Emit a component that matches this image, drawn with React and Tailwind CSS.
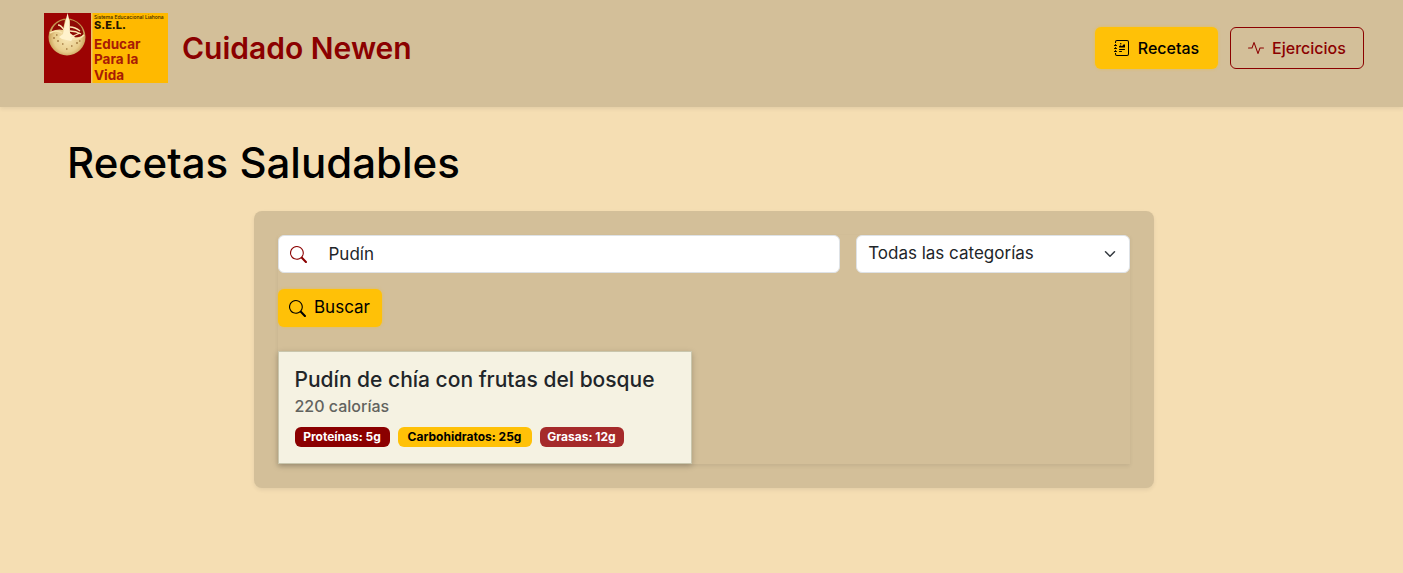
import { useState } from "react";
import { BsActivity, BsJournalRichtext, BsSearch } from "react-icons/bs";

const recipes = [
  {
    name: "Pudín de chía con frutas del bosque",
    calories: 220,
    nutrients: [
      { label: "Proteínas: 5g", tone: "min-w-[95px] bg-[#8b0000] text-white" },
      { label: "Carbohidratos: 25g", tone: "min-w-[134px] bg-[#ffc107] text-black" },
      { label: "Grasas: 12g", tone: "min-w-[84px] bg-[#a52a2a] text-white" },
    ],
  },
];

function Logo() {
  return (
    <svg viewBox="0 0 124 70" className="h-[70px] w-[124px] shrink-0" role="img" aria-label="Sistema Educacional Liahona">
      <defs>
        <radialGradient id="sphere" cx="0.5" cy="0.55" r="0.55">
          <stop offset="0" stopColor="#f7e6b4" />
          <stop offset="0.65" stopColor="#e8cd8c" />
          <stop offset="1" stopColor="#bd8d45" />
        </radialGradient>
      </defs>
      <rect width="124" height="70" fill="#ffb900" />
      <rect width="47" height="70" fill="#9c0303" />
      <rect x="47" width="1.5" height="70" fill="#e8c46c" />
      <circle cx="23" cy="24" r="18.5" fill="url(#sphere)" />
      <path d="M7.500 19C9 12 15 7.500 21 7L19 17Q13 15.500 7.500 19Z" fill="#8f0a05" />
      <path d="M26 7C33 8 38.500 13 39.500 21Q37 25 30 24L25 22Z" fill="#8f0a05" />
      <path d="M23.600 0L25.500 8L26 20L31 24L27 28L18 26L15 24L19 21L21.500 8Z" fill="#fff2cc" />
      <path d="M14 12Q17 12 20 17M26 14Q31 14 36 18M26 18Q32 18 37 21M27 24L36 20" stroke="#fbe6b2" strokeWidth="1.300" fill="none" />
      <path d="M6 20Q12 16 18 20M28 26Q35 27 40 22" stroke="#f9e4ae" strokeWidth="1.600" fill="none" />
      <path d="M9 25h2M13 28h2M12 22h1.500M32 30h2M35 28h1.500M22 36h1.500M18 31h1.500M27 33h1.500" stroke="#84541c" strokeWidth="1.200" />
      <g fontFamily="Inter, 'Liberation Sans', sans-serif">
        <text x="50" y="6" fontSize="5" fontWeight="500" fill="#3a2500">Sistema Educacional Liahona</text>
        <text x="50" y="16" fontSize="11" fontWeight="800" fill="#231500">S.E.L.</text>
        <g fontSize="13.500" fontWeight="700" fill="#a81b05">
          <text x="50" y="36">Educar</text>
          <text x="50" y="51">Para la</text>
          <text x="50" y="67">Vida</text>
        </g>
      </g>
    </svg>
  );
}

function RecipeCard({ recipe }) {
  return (
    <article className="border border-[#c9c6ad] bg-[#f5f2e2] p-4 text-[#212529] shadow-[0_2px_6px_rgba(0,0,0,0.22)]">
      <h2 className="text-[21px] leading-6 font-medium whitespace-nowrap">{recipe.name}</h2>
      <p className="mt-1 text-base leading-5 font-medium text-[#62635e]">{recipe.calories} calorías</p>
      <ul className="mt-[11px] flex flex-wrap gap-2">
        {recipe.nutrients.map((n) => (
          <li key={n.label} className={`flex h-5 items-center justify-center rounded-md text-xs font-bold ${n.tone}`}>
            {n.label}
          </li>
        ))}
      </ul>
    </article>
  );
}

export default function App() {
  const [query, setQuery] = useState("Pudín");

  return (
    <div className="min-h-screen bg-[#f5deb3] font-['Inter','Liberation_Sans',sans-serif] text-[17px] text-black">
      <header className="flex items-center justify-between bg-[#d3bf99] pt-[13px] pr-[39px] pb-6 pl-11 shadow-[0_2px_4px_rgba(0,0,0,0.075)]">
        <a href="#" className="flex items-center gap-[14px] text-[30px] font-semibold text-[#8b0000]">
          <Logo />
          Cuidado Newen
        </a>
        <nav className="flex gap-3 text-base font-medium">
          <a href="#recetas" className="flex h-[42px] min-w-[123px] items-center justify-center gap-2 rounded-md bg-[#ffc107] px-4 shadow-[0_0_3px_rgba(255,193,7,0.5)]">
            <BsJournalRichtext className="size-4" />
            Recetas
          </a>
          <a href="#ejercicios" className="flex h-[42px] min-w-[134px] items-center justify-center gap-2 rounded-md border border-[#8b0000] px-4 text-[#8b0000]">
            <BsActivity className="size-4" />
            Ejercicios
          </a>
        </nav>
      </header>

      <main className="pt-8 pr-[63px] pb-8 pl-[67px]">
        <h1 className="mb-6 text-[42px] leading-[48px] font-medium">Recetas Saludables</h1>

        <section className="mx-auto max-w-[900px] rounded-lg bg-[#d3bf99] p-6 shadow-[0_2px_4px_rgba(0,0,0,0.075)]">
          <div className="shadow-[0_2px_4px_rgba(0,0,0,0.075)]">
            <form className="grid grid-cols-3 gap-4" onSubmit={(e) => e.preventDefault()}>
              <div className="col-span-2 flex h-[38px] items-center rounded-md border border-[#dee2e6] bg-white">
                <label htmlFor="search" className="px-[11px] text-[#8b0000]">
                  <BsSearch className="size-[17px]" role="img" aria-label="Buscar receta" />
                </label>
                <input
                  id="search"
                  type="text"
                  value={query}
                  onChange={(e) => setQuery(e.target.value)}
                  className="h-full min-w-0 flex-1 px-[11px] text-[#212529] outline-none"
                />
              </div>
              <div className="grid items-center">
                <select
                  aria-label="Categoría"
                  className="col-start-1 row-start-1 h-[38px] w-full appearance-none rounded-md border border-[#dee2e6] bg-white pr-9 pl-[11px] text-[#212529]"
                >
                  <option>Todas las categorías</option>
                </select>
                <svg viewBox="0 0 16 16" className="pointer-events-none col-start-1 row-start-1 mr-3 h-3 w-4 justify-self-end" aria-hidden="true">
                  <path d="m2 5 6 6 6-6" fill="none" stroke="#343a40" strokeWidth="2" strokeLinecap="round" strokeLinejoin="round" />
                </svg>
              </div>
              <button
                type="submit"
                className="flex h-[38px] w-[104px] items-center justify-center gap-2 rounded-md bg-[#ffc107] shadow-[0_0_3px_rgba(255,193,7,0.5)]"
              >
                <BsSearch className="size-[17px]" />
                Buscar
              </button>
            </form>

            <div className="mt-6 grid grid-cols-2 gap-6">
              {recipes.map((r) => (
                <RecipeCard key={r.name} recipe={r} />
              ))}
            </div>
          </div>
        </section>
      </main>
    </div>
  );
}
